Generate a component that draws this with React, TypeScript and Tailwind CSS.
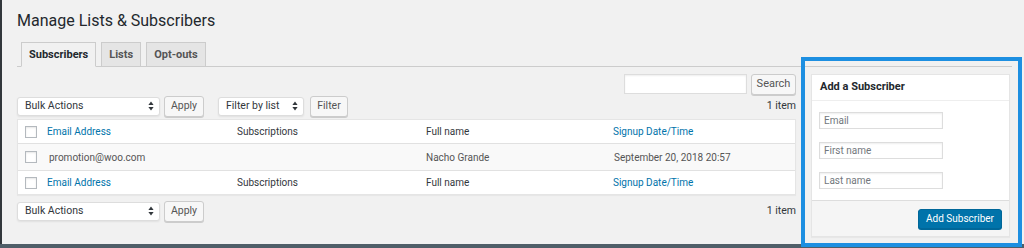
import React from 'react';

// Small up/down arrows used by the WP-style selects
function SelectArrows() {
  return (
    <svg width="6" height="10" viewBox="0 0 6 10" className="shrink-0">
      <path d="M3 0.5 L5.6 4 H0.4 Z" fill="#32373c" />
      <path d="M3 9.5 L5.6 6 H0.4 Z" fill="#32373c" />
    </svg>
  );
}

function Select({ label, width }: { label: string; width: string }) {
  return (
    <div
      className={`flex h-[19px] items-center justify-between rounded-[3px] border border-[#ddd] bg-white pl-[7px] pr-[5px] shadow-[0_1px_2px_rgba(0,0,0,0.07)] ${width}`}
    >
      <span>{label}</span>
      <SelectArrows />
    </div>
  );
}

function Button({ children, className = '' }: { children: React.ReactNode; className?: string }) {
  return (
    <button
      className={`flex h-[21px] items-center justify-center rounded-[3px] border border-[#ccc] bg-[#f7f7f7] text-[#555] shadow-[0_1px_0_#ccc] ${className}`}
    >
      {children}
    </button>
  );
}

function Checkbox() {
  return <span className="block h-[12px] w-[12px] border border-[#b4b9be] bg-white shadow-[inset_0_1px_2px_rgba(0,0,0,0.1)]" />;
}

function HeadRow({ border }: { border: string }) {
  return (
    <div className={`grid h-[24px] grid-cols-[29px_190px_189px_187px_1fr] items-center bg-white ${border} border-[#e1e1e1]`}>
      <div className="pl-[7px]">
        <Checkbox />
      </div>
      <div className="text-[#0073aa]">Email Address</div>
      <div>Subscriptions</div>
      <div>Full name</div>
      <div className="text-[#0073aa]">Signup Date/Time</div>
    </div>
  );
}

export default function App() {
  const tabs = [
    { id: 'subscribers', name: 'Subscribers' },
    { id: 'lists', name: 'Lists' },
    { id: 'optouts', name: 'Opt-outs' },
  ];
  const active = 'subscribers';

  return (
    <div className="flex h-[248px] w-[1024px] flex-col overflow-hidden bg-[#f1f1f1] font-['Roboto',sans-serif] text-[10.5px] text-[#32373c]">
      <div className="flex min-h-0 flex-1">
        <div className="w-[2px] bg-[#32373c]" />
        <div className="relative flex-1 pl-[15px] pr-[12px]">
          <h1 className="pt-[11px] text-[16px] leading-[20px] text-[#23282d]">Manage Lists &amp; Subscribers</h1>

          <nav className="mt-[11px] flex gap-[5px] border-b border-[#ccc] pl-[4px]">
            {tabs.map((tab) => (
              <div
                key={tab.id}
                className={`-mb-px h-[25px] border border-[#ccc] px-[7px] text-[11px] font-bold leading-[23px] ${
                  active === tab.id ? 'border-b-[#f1f1f1] bg-[#f1f1f1] text-[#23282d]' : 'bg-[#e5e5e5] text-[#555]'
                }`}
              >
                {tab.name}
              </div>
            ))}
          </nav>

          <div className="flex gap-[15px]">
            <main className="w-[779px]">
              <div className="mt-[7px] flex justify-end gap-[4px]">
                <div className="h-[20px] w-[123px] border border-[#ddd] bg-white shadow-[inset_0_1px_2px_rgba(0,0,0,0.07)]" />
                <Button className="w-[45px] text-[11px]">Search</Button>
              </div>

              <div className="mt-[1px] flex h-[20px] items-center">
                <Select label="Bulk Actions" width="w-[143px]" />
                <Button className="ml-[4px] w-[40px]">Apply</Button>
                <Select label="Filter by list" width="ml-[14px] w-[86px]" />
                <Button className="ml-[6px] w-[38px]">Filter</Button>
                <span className="ml-auto">1 item</span>
              </div>

              <div className="mt-[3px] border border-[#e5e5e5] text-[10px] shadow-[0_1px_1px_rgba(0,0,0,0.04)]">
                <HeadRow border="border-b" />
                <div className="grid h-[26px] grid-cols-[29px_190px_189px_187px_1fr] items-center bg-[#f9f9f9] text-[#555]">
                  <div className="pl-[7px]">
                    <Checkbox />
                  </div>
                  <div className="pl-[2px]">promotion@woo.com</div>
                  <div />
                  <div>Nacho Grande</div>
                  <div className="pl-[1px]">September 20, 2018 20:57</div>
                </div>
                <HeadRow border="border-t" />
              </div>

              <div className="mt-[6px] flex h-[20px] items-center">
                <Select label="Bulk Actions" width="w-[143px]" />
                <Button className="ml-[4px] w-[40px]">Apply</Button>
                <span className="ml-auto">1 item</span>
              </div>
            </main>

            <aside className="mt-[7px] w-[199px]">
              <div className="border border-[#e5e5e5] bg-white shadow-[0_1px_1px_rgba(0,0,0,0.04)]">
                <div className="flex h-[26px] items-center border-b border-[#eee] pl-[8px] text-[11px] font-bold text-[#23282d]">
                  Add a Subscriber
                </div>
                <div className="flex flex-col gap-[13px] px-[7px] pb-[11px] pt-[11px]">
                  {['Email', 'First name', 'Last name'].map((ph) => (
                    <input
                      key={ph}
                      placeholder={ph}
                      className="h-[17px] w-[124px] border border-[#ddd] bg-white px-[4px] text-[10px] shadow-[inset_0_1px_2px_rgba(0,0,0,0.07)] outline-none placeholder:text-[#72777c]"
                    />
                  ))}
                </div>
                <div className="flex h-[36px] items-center justify-end border-t border-[#ddd] bg-[#f5f5f5] pr-[7px]">
                  <button className="h-[20px] w-[84px] rounded-[3px] border border-[#006799] bg-[#0073aa] text-[10px] text-white shadow-[0_1px_0_#006799]">
                    Add Subscriber
                  </button>
                </div>
              </div>
            </aside>
          </div>

          <div className="pointer-events-none absolute left-[799px] top-[57px] h-[190px] w-[221px] border-4 border-[#1d8fe1]" />
        </div>
      </div>
      <div className="h-[4px] bg-[#4f5e68]" />
    </div>
  );
}
